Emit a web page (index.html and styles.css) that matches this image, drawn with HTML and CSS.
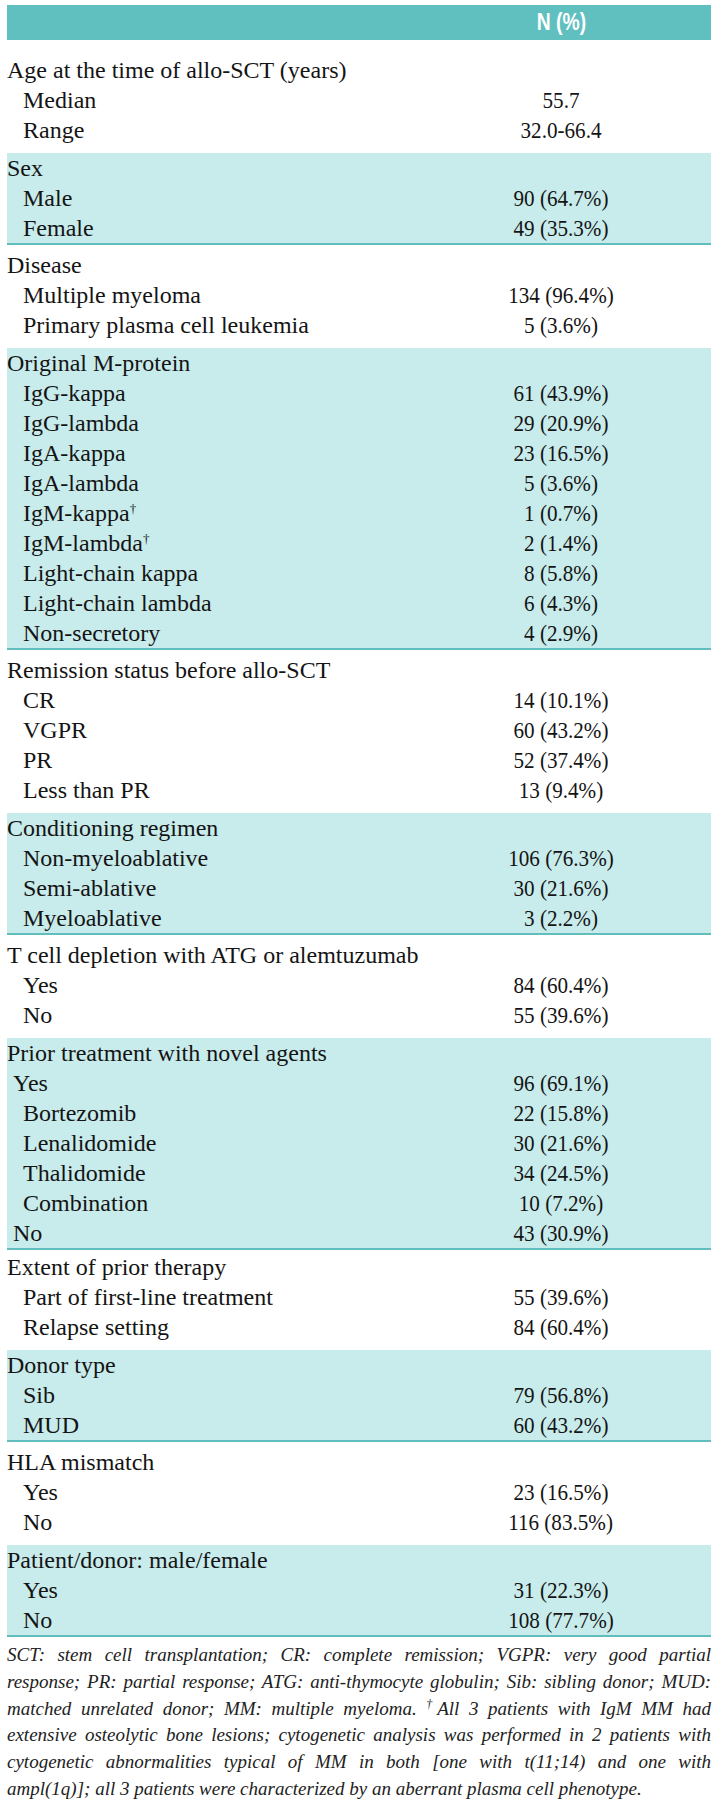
FILE: index.html
```html
<!DOCTYPE html>
<html lang="en">
<head>
<meta charset="utf-8">
<title>Patient characteristics</title>
<link rel="stylesheet" href="styles.css">
</head>
<body>
<div class="page">
  <div class="thead">
    <span class="lbl"></span>
    <span class="val"><span class="th">N (%)</span></span>
  </div>

  <div class="group first">
    <div class="row"><span class="lbl">Age at the time of allo-SCT (years)</span><span class="val"></span></div>
    <div class="row sub"><span class="lbl">Median</span><span class="val"><span class="num">55.7</span></span></div>
    <div class="row sub"><span class="lbl">Range</span><span class="val"><span class="num">32.0-66.4</span></span></div>
  </div>

  <div class="group shaded">
    <div class="row"><span class="lbl">Sex</span><span class="val"></span></div>
    <div class="row sub"><span class="lbl">Male</span><span class="val"><span class="num">90 (64.7%)</span></span></div>
    <div class="row sub"><span class="lbl">Female</span><span class="val"><span class="num">49 (35.3%)</span></span></div>
  </div>

  <div class="group">
    <div class="row"><span class="lbl">Disease</span><span class="val"></span></div>
    <div class="row sub"><span class="lbl">Multiple myeloma</span><span class="val"><span class="num">134 (96.4%)</span></span></div>
    <div class="row sub"><span class="lbl">Primary plasma cell leukemia</span><span class="val"><span class="num">5 (3.6%)</span></span></div>
  </div>

  <div class="group shaded">
    <div class="row"><span class="lbl">Original M-protein</span><span class="val"></span></div>
    <div class="row sub"><span class="lbl">IgG-kappa</span><span class="val"><span class="num">61 (43.9%)</span></span></div>
    <div class="row sub"><span class="lbl">IgG-lambda</span><span class="val"><span class="num">29 (20.9%)</span></span></div>
    <div class="row sub"><span class="lbl">IgA-kappa</span><span class="val"><span class="num">23 (16.5%)</span></span></div>
    <div class="row sub"><span class="lbl">IgA-lambda</span><span class="val"><span class="num">5 (3.6%)</span></span></div>
    <div class="row sub"><span class="lbl">IgM-kappa<sup class="dag">†</sup></span><span class="val"><span class="num">1 (0.7%)</span></span></div>
    <div class="row sub"><span class="lbl">IgM-lambda<sup class="dag">†</sup></span><span class="val"><span class="num">2 (1.4%)</span></span></div>
    <div class="row sub"><span class="lbl">Light-chain kappa</span><span class="val"><span class="num">8 (5.8%)</span></span></div>
    <div class="row sub"><span class="lbl">Light-chain lambda</span><span class="val"><span class="num">6 (4.3%)</span></span></div>
    <div class="row sub"><span class="lbl">Non-secretory</span><span class="val"><span class="num">4 (2.9%)</span></span></div>
  </div>

  <div class="group">
    <div class="row"><span class="lbl">Remission status before allo-SCT</span><span class="val"></span></div>
    <div class="row sub"><span class="lbl">CR</span><span class="val"><span class="num">14 (10.1%)</span></span></div>
    <div class="row sub"><span class="lbl">VGPR</span><span class="val"><span class="num">60 (43.2%)</span></span></div>
    <div class="row sub"><span class="lbl">PR</span><span class="val"><span class="num">52 (37.4%)</span></span></div>
    <div class="row sub"><span class="lbl">Less than PR</span><span class="val"><span class="num">13 (9.4%)</span></span></div>
  </div>

  <div class="group shaded">
    <div class="row"><span class="lbl">Conditioning regimen</span><span class="val"></span></div>
    <div class="row sub"><span class="lbl">Non-myeloablative</span><span class="val"><span class="num">106 (76.3%)</span></span></div>
    <div class="row sub"><span class="lbl">Semi-ablative</span><span class="val"><span class="num">30 (21.6%)</span></span></div>
    <div class="row sub"><span class="lbl">Myeloablative</span><span class="val"><span class="num">3 (2.2%)</span></span></div>
  </div>

  <div class="group">
    <div class="row"><span class="lbl">T cell depletion with ATG or alemtuzumab</span><span class="val"></span></div>
    <div class="row sub"><span class="lbl">Yes</span><span class="val"><span class="num">84 (60.4%)</span></span></div>
    <div class="row sub"><span class="lbl">No</span><span class="val"><span class="num">55 (39.6%)</span></span></div>
  </div>

  <div class="group shaded">
    <div class="row"><span class="lbl">Prior treatment with novel agents</span><span class="val"></span></div>
    <div class="row half"><span class="lbl">Yes</span><span class="val"><span class="num">96 (69.1%)</span></span></div>
    <div class="row sub"><span class="lbl">Bortezomib</span><span class="val"><span class="num">22 (15.8%)</span></span></div>
    <div class="row sub"><span class="lbl">Lenalidomide</span><span class="val"><span class="num">30 (21.6%)</span></span></div>
    <div class="row sub"><span class="lbl">Thalidomide</span><span class="val"><span class="num">34 (24.5%)</span></span></div>
    <div class="row sub"><span class="lbl">Combination</span><span class="val"><span class="num">10 (7.2%)</span></span></div>
    <div class="row half"><span class="lbl">No</span><span class="val"><span class="num">43 (30.9%)</span></span></div>
  </div>

  <div class="group tight">
    <div class="row"><span class="lbl">Extent of prior therapy</span><span class="val"></span></div>
    <div class="row sub"><span class="lbl">Part of first-line treatment</span><span class="val"><span class="num">55 (39.6%)</span></span></div>
    <div class="row sub"><span class="lbl">Relapse setting</span><span class="val"><span class="num">84 (60.4%)</span></span></div>
  </div>

  <div class="group shaded">
    <div class="row"><span class="lbl">Donor type</span><span class="val"></span></div>
    <div class="row sub"><span class="lbl">Sib</span><span class="val"><span class="num">79 (56.8%)</span></span></div>
    <div class="row sub"><span class="lbl">MUD</span><span class="val"><span class="num">60 (43.2%)</span></span></div>
  </div>

  <div class="group">
    <div class="row"><span class="lbl">HLA mismatch</span><span class="val"></span></div>
    <div class="row sub"><span class="lbl">Yes</span><span class="val"><span class="num">23 (16.5%)</span></span></div>
    <div class="row sub"><span class="lbl">No</span><span class="val"><span class="num">116 (83.5%)</span></span></div>
  </div>

  <div class="group shaded">
    <div class="row"><span class="lbl">Patient/donor: male/female</span><span class="val"></span></div>
    <div class="row sub"><span class="lbl">Yes</span><span class="val"><span class="num">31 (22.3%)</span></span></div>
    <div class="row sub"><span class="lbl">No</span><span class="val"><span class="num">108 (77.7%)</span></span></div>
  </div>

  <div class="note">
    <div class="nl">SCT: stem cell transplantation; CR: complete remission; VGPR: very good partial</div>
    <div class="nl">response; PR: partial response; ATG: anti-thymocyte globulin; Sib: sibling donor; MUD:</div>
    <div class="nl">matched unrelated donor; MM: multiple myeloma. <sup class="dag">†</sup>All 3 patients with IgM MM had</div>
    <div class="nl">extensive osteolytic bone lesions; cytogenetic analysis was performed in 2 patients with</div>
    <div class="nl">cytogenetic abnormalities typical of MM in both [one with t(11;14) and one with</div>
    <div class="nl last">ampl(1q)]; all 3 patients were characterized by an aberrant plasma cell phenotype.</div>
  </div>
</div>
</body>
</html>
```

FILE: styles.css
```css
html, body {
  margin: 0;
  padding: 0;
  background: #ffffff;
}

.page {
  width: 704px;
  padding: 5px 13px 0 7px;
  font-family: "Liberation Serif", "Times New Roman", serif;
  font-size: 24px;
  color: #141414;
}

.thead {
  display: grid;
  grid-template-columns: 404px 300px;
  height: 35px;
  align-items: center;
  background: #60bfbf;
}

.th {
  display: inline-block;
  font-family: "Liberation Sans", Arial, sans-serif;
  font-weight: bold;
  font-size: 23px;
  line-height: 35px;
  color: #ffffff;
  transform: scaleX(0.84);
}

.group {
  padding: 5px 0 8px;
}

.group.first {
  padding-top: 15px;
}

.group.tight {
  padding-top: 2px;
}

.group.shaded {
  padding: 0;
  background: #c8ebeb;
  border-bottom: 2px solid #62bdbd;
}

.row {
  display: grid;
  grid-template-columns: 404px 300px;
  height: 30px;
  line-height: 30px;
  white-space: nowrap;
}

.row.sub .lbl {
  padding-left: 16px;
}

.row.half .lbl {
  padding-left: 6px;
}

.val {
  text-align: center;
}

.num {
  display: inline-block;
  transform: scaleX(0.88);
}

.dag {
  font-size: 13px;
  line-height: 0;
  vertical-align: 8px;
}

.note {
  margin-top: 5px;
  font-style: italic;
  font-size: 19px;
  line-height: 26.8px;
  color: #222222;
}

.nl {
  text-align: justify;
  text-align-last: justify;
  white-space: nowrap;
}

.nl.last {
  text-align-last: left;
}

.note .dag {
  font-size: 12px;
  vertical-align: 7px;
}
```
